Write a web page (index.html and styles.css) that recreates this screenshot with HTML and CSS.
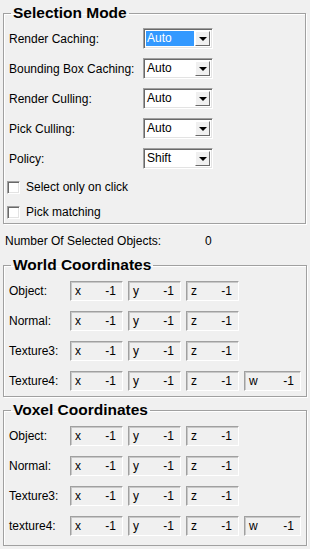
FILE: index.html
```html
<!DOCTYPE html>
<html lang="en">
<head>
  <meta charset="UTF-8" />
  <title>Selection Mode</title>
  <link rel="stylesheet" href="styles.css">
</head>
<body>
  <fieldset class="group selection">
    <legend>Selection Mode</legend>
    <div class="form-rows">
      <span class="label">Render Caching:</span>
      <div class="combo"><span class="value active">Auto</span><span class="drop"></span></div>
      <span class="label">Bounding Box Caching:</span>
      <div class="combo"><span class="value">Auto</span><span class="drop"></span></div>
      <span class="label">Render Culling:</span>
      <div class="combo"><span class="value">Auto</span><span class="drop"></span></div>
      <span class="label">Pick Culling:</span>
      <div class="combo"><span class="value">Auto</span><span class="drop"></span></div>
      <span class="label">Policy:</span>
      <div class="combo"><span class="value">Shift</span><span class="drop"></span></div>
    </div>
    <div class="check first"><span class="box"></span>Select only on click</div>
    <div class="check"><span class="box"></span>Pick matching</div>
  </fieldset>

  <div class="count-row">
    <span class="count-label">Number Of Selected Objects:</span>
    <span class="count-value">0</span>
  </div>

  <fieldset class="group coords world">
    <legend>World Coordinates</legend>
    <div class="coord-rows">
      <span class="label">Object:</span>
      <div class="field"><span>x</span><span>-1</span></div>
      <div class="field"><span>y</span><span>-1</span></div>
      <div class="field"><span>z</span><span>-1</span></div>
      <span></span>
      <span class="label">Normal:</span>
      <div class="field"><span>x</span><span>-1</span></div>
      <div class="field"><span>y</span><span>-1</span></div>
      <div class="field"><span>z</span><span>-1</span></div>
      <span></span>
      <span class="label">Texture3:</span>
      <div class="field"><span>x</span><span>-1</span></div>
      <div class="field"><span>y</span><span>-1</span></div>
      <div class="field"><span>z</span><span>-1</span></div>
      <span></span>
      <span class="label">Texture4:</span>
      <div class="field"><span>x</span><span>-1</span></div>
      <div class="field"><span>y</span><span>-1</span></div>
      <div class="field"><span>z</span><span>-1</span></div>
      <div class="field wide"><span>w</span><span>-1</span></div>
    </div>
  </fieldset>

  <fieldset class="group coords voxel">
    <legend>Voxel Coordinates</legend>
    <div class="coord-rows">
      <span class="label">Object:</span>
      <div class="field"><span>x</span><span>-1</span></div>
      <div class="field"><span>y</span><span>-1</span></div>
      <div class="field"><span>z</span><span>-1</span></div>
      <span></span>
      <span class="label">Normal:</span>
      <div class="field"><span>x</span><span>-1</span></div>
      <div class="field"><span>y</span><span>-1</span></div>
      <div class="field"><span>z</span><span>-1</span></div>
      <span></span>
      <span class="label">Texture3:</span>
      <div class="field"><span>x</span><span>-1</span></div>
      <div class="field"><span>y</span><span>-1</span></div>
      <div class="field"><span>z</span><span>-1</span></div>
      <span></span>
      <span class="label">texture4:</span>
      <div class="field"><span>x</span><span>-1</span></div>
      <div class="field"><span>y</span><span>-1</span></div>
      <div class="field"><span>z</span><span>-1</span></div>
      <div class="field wide"><span>w</span><span>-1</span></div>
    </div>
  </fieldset>
</body>
</html>
```

FILE: styles.css
```css
body {
  margin: 0;
  padding: 4px 0 0 0;
  background: #f0f0f0;
  font-family: "Liberation Sans", Arial, sans-serif;
  font-size: 12px;
  color: #000;
  overflow: hidden;
}

.group {
  margin: 0 4px 0 3px;
  padding: 6px 5px 3px 5px;
  border: 1px solid #a0a0a0;
  box-shadow: inset 1px 1px 0 #fff, 1px 1px 0 #fff;
}
.group legend {
  margin-left: 2px;
  padding: 0 2px;
  font-size: 15.5px;
  font-weight: bold;
  line-height: 18px;
}

/* selection mode */
.form-rows {
  display: grid;
  grid-template-columns: 134px 70px;
  row-gap: 9px;
  align-items: center;
}
.combo {
  display: flex;
  height: 21px;
  box-sizing: border-box;
  background: #fff;
  border-top: 1px solid #a0a0a0; border-left: 1px solid #a0a0a0;
  border-right: 1px solid #fff; border-bottom: 1px solid #fff;
  box-shadow: inset 1px 1px 0 #696969, inset -1px -1px 0 #e3e3e3;
  padding: 2px 2px 2px 2px;
}
.combo .value {
  flex: 1;
  padding-left: 1px;
  margin-right: 1px;
  line-height: 15px;
}
.combo .value.active {
  background: #3399ff;
  color: #fff;
}
.combo .drop {
  width: 15px;
  box-sizing: border-box;
  background: #f0f0f0;
  border-top: 1px solid #fff; border-left: 1px solid #fff;
  border-right: 1px solid #696969; border-bottom: 1px solid #696969;
  display: flex; align-items: center; justify-content: center;
}
.combo .drop::after {
  content: "";
  border-left: 4px solid transparent;
  border-right: 4px solid transparent;
  border-top: 4px solid #000;
  margin-top: 1px;
}

.check {
  display: flex;
  align-items: center;
  height: 16px;
  margin-top: 9px;
  margin-left: -2px;
}
.check.first { margin-top: 10px; }
.check .box {
  width: 13px; height: 13px;
  box-sizing: border-box;
  background: #fff;
  border-top: 1px solid #a0a0a0; border-left: 1px solid #a0a0a0;
  border-right: 1px solid #fff; border-bottom: 1px solid #fff;
  box-shadow: inset 1px 1px 0 #696969, inset -1px -1px 0 #e3e3e3;
  margin-right: 6px;
}

.count-row {
  display: flex;
  line-height: 16px;
  margin: 9px 0 7px 5px;
}
.count-label { width: 200px; }

/* coordinates */
.coords { padding: 7px 5px 5px 5px; }
.coords.voxel { margin-top: 4px; padding-bottom: 9px; }
.coord-rows {
  display: grid;
  grid-template-columns: 56px 53px 53px 53px 57px;
  column-gap: 5px;
  row-gap: 10px;
  align-items: center;
}
.field {
  display: flex;
  justify-content: space-between;
  height: 20px;
  box-sizing: border-box;
  padding: 0 6px 0 4px;
  line-height: 18px;
  border-top: 1px solid #a0a0a0; border-left: 1px solid #a0a0a0;
  border-right: 1px solid #fff; border-bottom: 1px solid #fff;
  box-shadow: inset 1px 1px 0 #c8c8c8;
}
```
